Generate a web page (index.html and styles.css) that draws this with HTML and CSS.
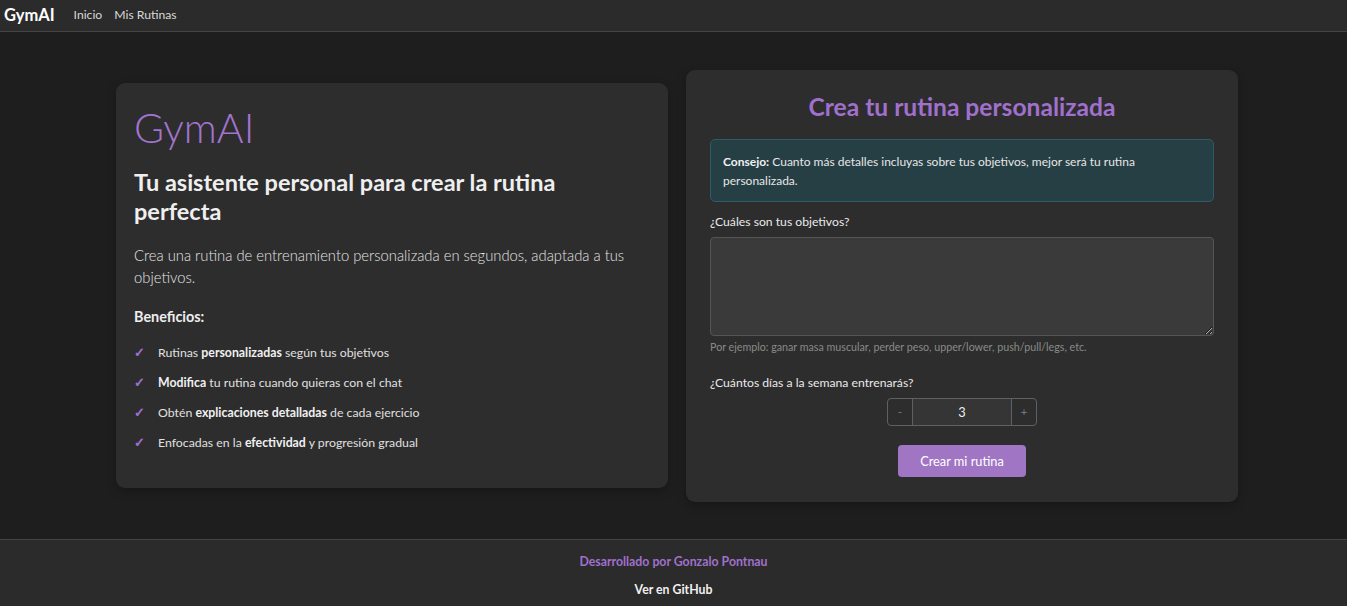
FILE: index.html
```html
<!DOCTYPE html>
<html lang="es">
<head>
<meta charset="utf-8">
<title>GymAI</title>
<link rel="stylesheet" href="styles.css">
</head>
<body>
<nav class="navbar">
  <a class="brand" href="#">GymAI</a>
  <a class="nav-link" href="#">Inicio</a>
  <a class="nav-link" href="#">Mis Rutinas</a>
</nav>
<main class="main">
  <div class="row">
    <section class="card intro">
      <h1 class="display">GymAI</h1>
      <h2 class="tagline">Tu asistente personal para crear la rutina perfecta</h2>
      <p class="lead">Crea una rutina de entrenamiento personalizada en segundos, adaptada a tus objetivos.</p>
      <h3 class="benefits-title">Beneficios:</h3>
      <ul class="benefits">
        <li><span class="check">✓</span><span>Rutinas <b>personalizadas</b> según tus objetivos</span></li>
        <li><span class="check">✓</span><span><b>Modifica</b> tu rutina cuando quieras con el chat</span></li>
        <li><span class="check">✓</span><span>Obtén <b>explicaciones detalladas</b> de cada ejercicio</span></li>
        <li><span class="check">✓</span><span>Enfocadas en la <b>efectividad</b> y progresión gradual</span></li>
      </ul>
    </section>
    <section class="card form-card">
      <h2 class="form-title">Crea tu rutina personalizada</h2>
      <div class="alert"><b>Consejo:</b> Cuanto más detalles incluyas sobre tus objetivos, mejor será tu rutina personalizada.</div>
      <label class="label" for="goals">¿Cuáles son tus objetivos?</label>
      <textarea id="goals" class="textarea"></textarea>
      <div class="help">Por ejemplo: ganar masa muscular, perder peso, upper/lower, push/pull/legs, etc.</div>
      <label class="label days-label">¿Cuántos días a la semana entrenarás?</label>
      <div class="stepper">
        <button class="step-btn">-</button>
        <div class="step-value">3</div>
        <button class="step-btn">+</button>
      </div>
      <div class="submit-row"><button class="submit">Crear mi rutina</button></div>
    </section>
  </div>
</main>
<footer class="footer">
  <div class="credit">Desarrollado por Gonzalo Pontnau</div>
  <a class="gh" href="#">Ver en GitHub</a>
</footer>
</body>
</html>
```

FILE: styles.css
```css
* { box-sizing: border-box; }
html, body { margin: 0; padding: 0; }
body {
  height: 100vh;
  display: flex;
  flex-direction: column;
  background: #1e1e1e;
  color: #e6e6e6;
  font-family: "Lato", "Open Sans", sans-serif;
  font-size: 12.8px;
  overflow: hidden;
}
a { text-decoration: none; }
.navbar {
  height: 32px;
  flex: 0 0 32px;
  display: flex;
  align-items: center;
  background: #2b2b2b;
  border-bottom: 1px solid #444;
  padding: 0 4px 2px;
}
.brand {
  color: #fff;
  font-weight: 700;
  font-size: 16.5px;
  margin-right: 19px;
}
.nav-link {
  color: #d8d8d8;
  font-size: 12.2px;
  margin-right: 12px;
}
.main {
  flex: 1;
  display: flex;
  align-items: center;
  padding: 0 109px 0 116px;
}
.row {
  width: 100%;
  display: grid;
  grid-template-columns: 1fr 1fr;
  gap: 18px;
  align-items: center;
}
.card {
  background: #2d2d2d;
  border-radius: 9px;
  box-shadow: 0 3px 10px rgba(0,0,0,0.25);
}
.intro {
  padding: 20px 18px 26px;
  height: 405px;
}
.display {
  margin: 0;
  font-weight: 300;
  font-size: 41px;
  line-height: 1.2;
  color: #a274cf;
}
.tagline {
  margin: 16px 0 0;
  max-width: 470px;
  font-size: 23.5px;
  font-weight: 700;
  line-height: 29px;
  color: #efefef;
}
.lead {
  margin: 18px 0 0;
  font-size: 14.8px;
  font-weight: 300;
  line-height: 22px;
  color: #e4e4e4;
}
.benefits-title {
  margin: 20px 0 0;
  font-size: 14.4px;
  font-weight: 700;
  color: #eee;
}
.benefits {
  list-style: none;
  margin: 12px 0 0;
  padding: 0;
}
.benefits li {
  display: flex;
  align-items: center;
  height: 30px;
  font-size: 12.3px;
  color: #e0e0e0;
}
.benefits b { font-weight: 700; color: #f0f0f0; }
.check {
  color: #9f6fd6;
  width: 24px;
  font-size: 13px;
  font-weight: 700;
}
.form-card {
  padding: 20px 24px 23px;
  height: 432px;
  display: flex;
  flex-direction: column;
}
.form-title {
  margin: 0;
  text-align: center;
  font-size: 24.6px;
  font-weight: 700;
  line-height: 34px;
  color: #a070cd;
}
.alert {
  margin-top: 15px;
  background: #263f45;
  border: 1px solid #2d5c66;
  border-radius: 5px;
  padding: 12px 12px 11px;
  font-size: 12px;
  line-height: 19px;
  color: #e6e6e6;
}
.alert b { font-weight: 700; color: #f0f0f0; }
.label {
  display: block;
  margin-top: 11px;
  font-size: 12.2px;
  line-height: 18px;
  color: #eaeaea;
}
.textarea {
  display: block;
  margin-top: 6px;
  width: 100%;
  height: 99px;
  background: #3a3a3a;
  border: 1px solid #555;
  border-radius: 4px;
  resize: vertical;
  color: #eee;
}
.help {
  margin-top: 4px;
  font-size: 10.7px;
  color: #8a8a8a;
}
.days-label { margin-top: 21px; }
.stepper {
  margin: 6px auto 0;
  width: 150px;
  height: 28px;
  display: flex;
  border: 1px solid #5c6166;
  border-radius: 4px;
  overflow: hidden;
}
.step-btn {
  width: 24px;
  background: transparent;
  border: 0;
  color: #777d83;
  font-size: 11px;
  padding: 0;
  font-family: inherit;
}
.step-value {
  flex: 1;
  background: #353535;
  border-left: 1px solid #5c6166;
  border-right: 1px solid #5c6166;
  display: flex;
  align-items: center;
  justify-content: center;
  font-size: 12.8px;
  color: #eee;
}
.submit-row {
  display: flex;
  justify-content: center;
  margin-top: 19px;
}
.submit {
  width: 128px;
  height: 32px;
  background: #a076c4;
  color: #fff;
  border: 0;
  border-radius: 4px;
  font-family: inherit;
  font-size: 12.8px;
}
.footer {
  flex: 0 0 67px;
  background: #2b2b2b;
  border-top: 1px solid #444;
  display: flex;
  flex-direction: column;
  align-items: center;
  padding-top: 14px;
}
.credit {
  color: #a070cd;
  font-size: 12.3px;
  font-weight: 700;
}
.gh {
  margin-top: 13px;
  color: #f0f0f0;
  font-size: 12.3px;
  font-weight: 700;
}
```
